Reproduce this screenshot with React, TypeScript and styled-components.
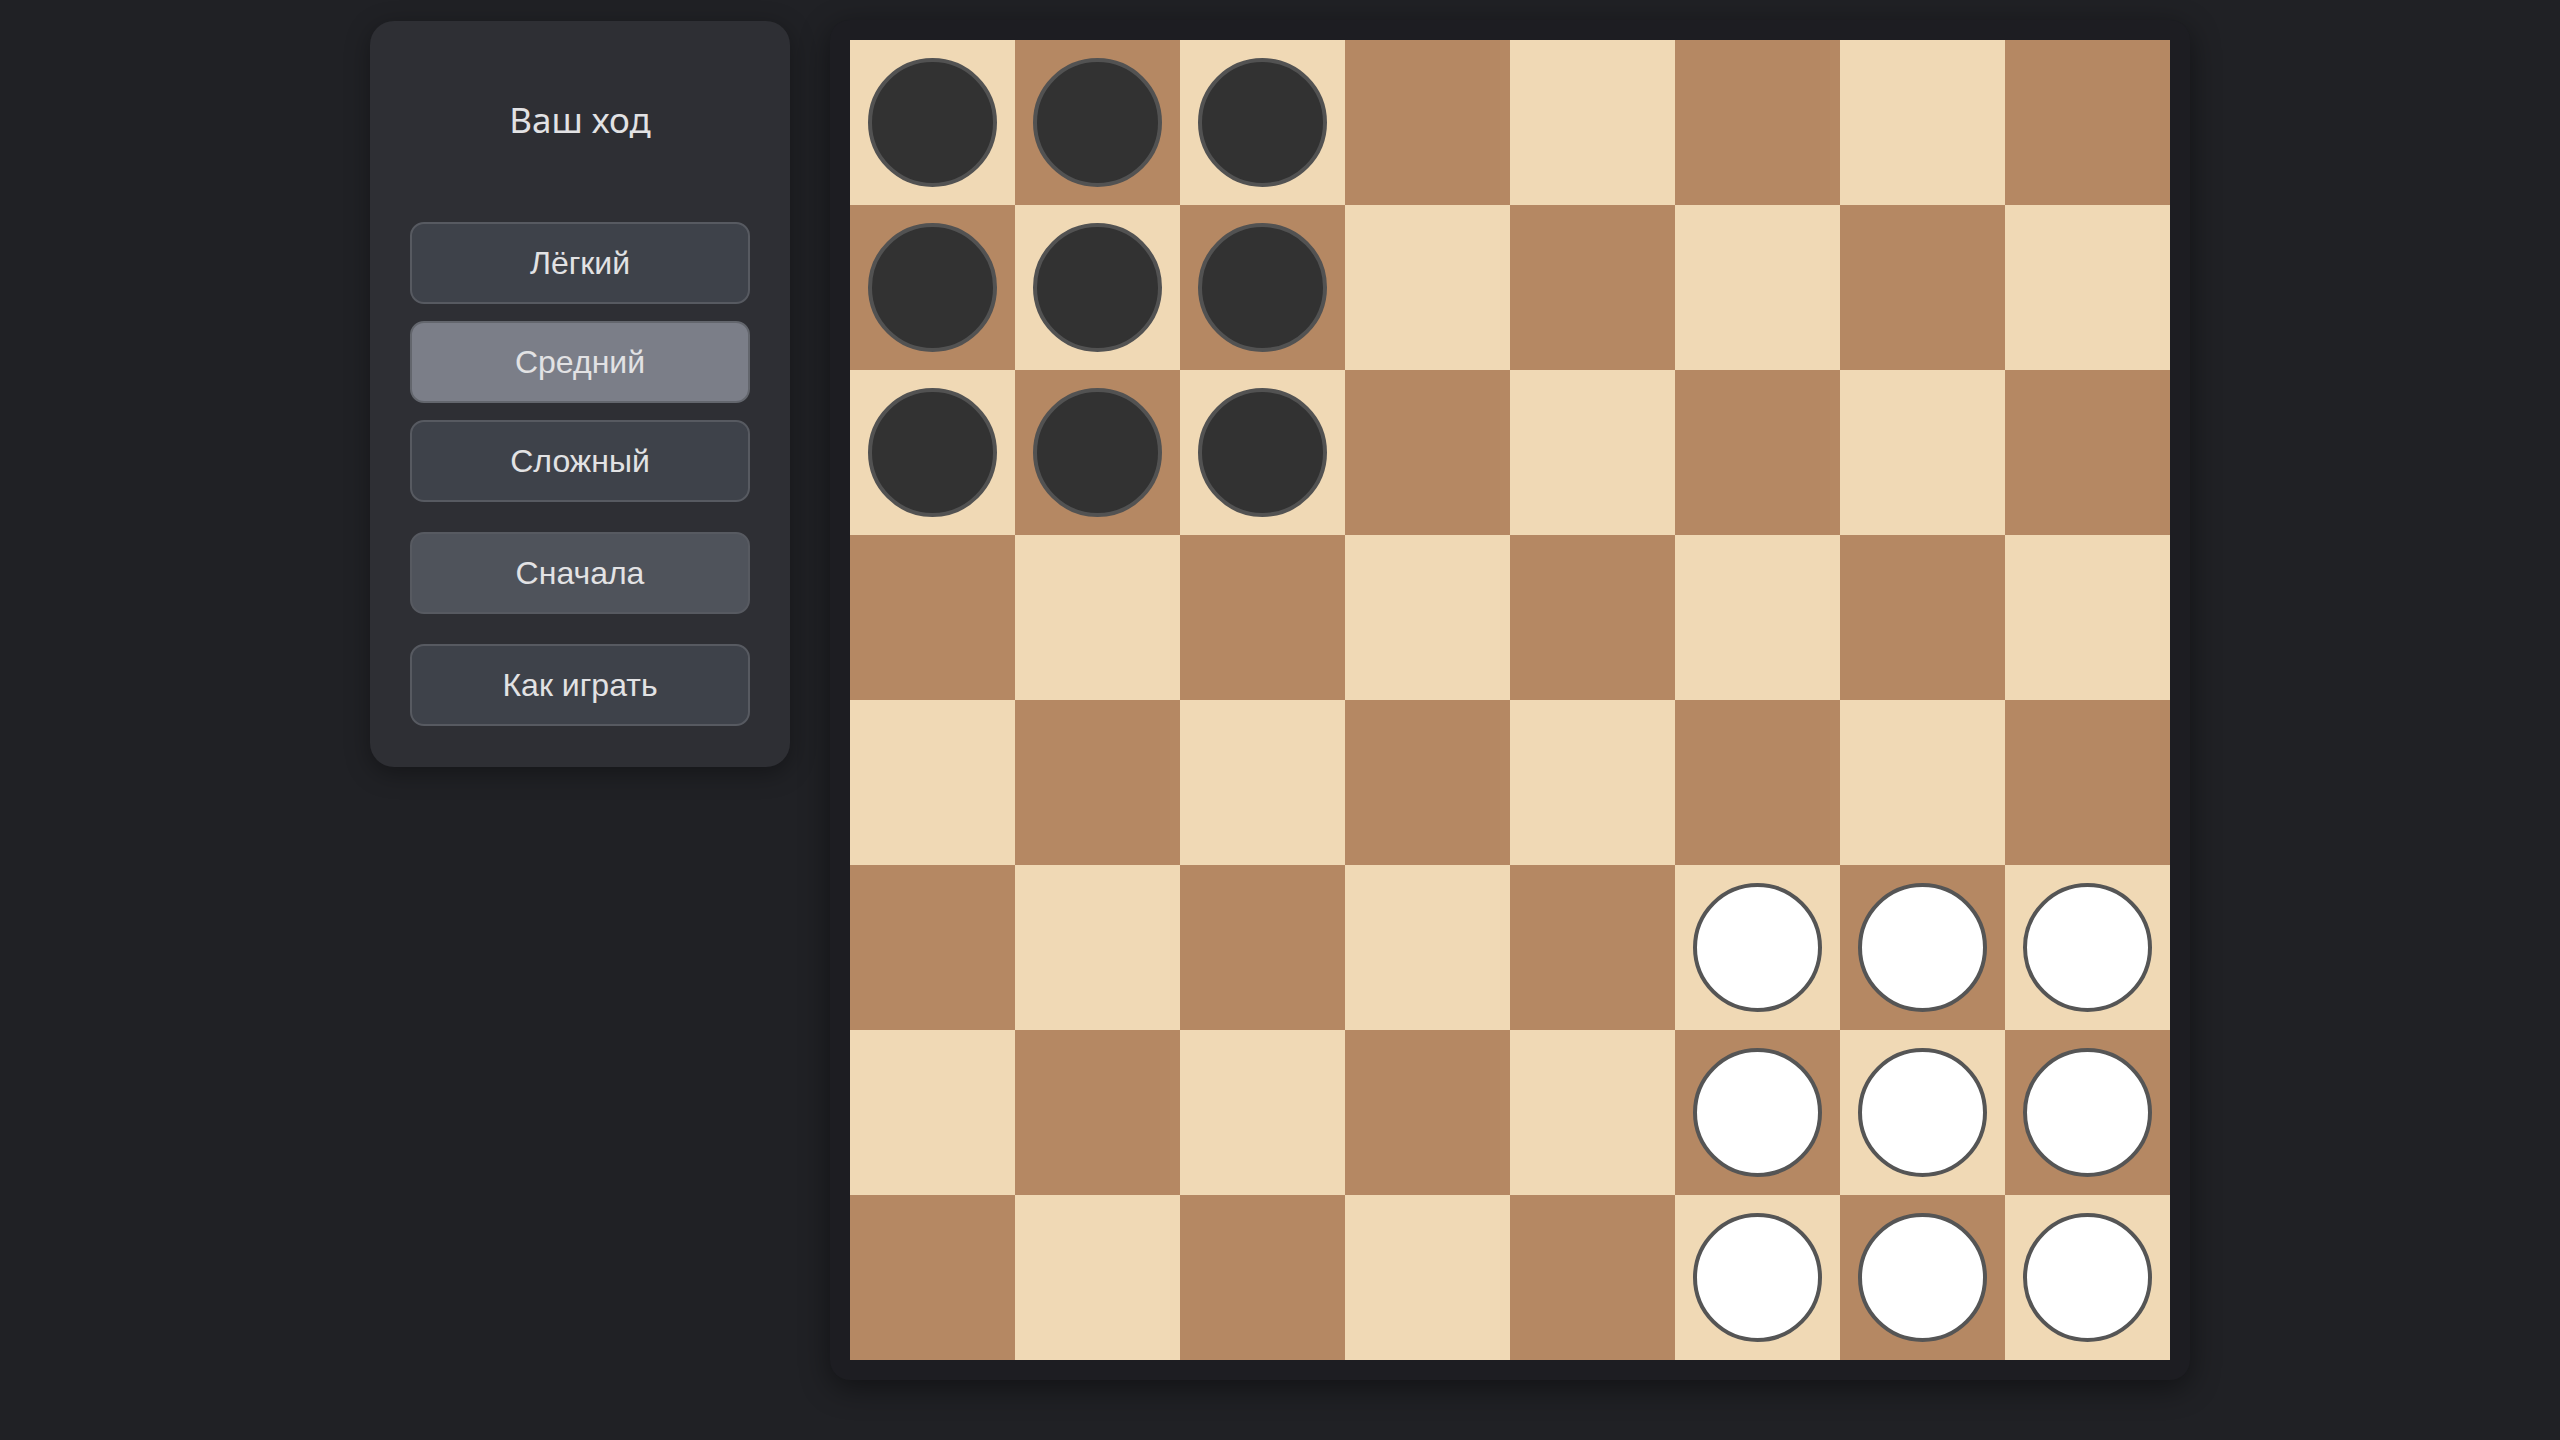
import React from "react";
import styled, { createGlobalStyle } from "styled-components";

const Global = createGlobalStyle`
  html, body {
    margin: 0;
    padding: 0;
    background: #202125;
    min-height: 100%;
  }
  body {
    font-family: "Noto Sans", "Open Sans", sans-serif;
    color: #e4e4e6;
  }
`;

const Page = styled.div`
  display: flex;
  justify-content: center;
  align-items: flex-start;
  gap: 40px;
  padding: 20px 0;
  min-height: 1440px;
  box-sizing: border-box;
  background: #202125;
`;

const Sidebar = styled.aside`
  width: 420px;
  box-sizing: border-box;
  margin-top: 1px;
  padding: 40px 40px 41px;
  background: #2e2f34;
  border-radius: 24px;
  box-shadow: 0 6px 24px rgba(0, 0, 0, 0.35);
  display: flex;
  flex-direction: column;
`;

const Title = styled.div`
  margin: 37px 0 80px;
  text-align: center;
  font-family: "Noto Sans", sans-serif;
  font-size: 35px;
  line-height: 44px;
  color: #e2e2e4;
`;

const Group = styled.div<{ $mt?: number }>`
  display: flex;
  flex-direction: column;
  gap: 17px;
  margin-top: ${(p) => p.$mt ?? 0}px;
`;

const Btn = styled.button<{ $variant?: "normal" | "active" | "reset" }>`
  height: 82px;
  width: 100%;
  box-sizing: border-box;
  border-radius: 14px;
  border: 2px solid
    ${(p) => (p.$variant === "active" ? "#63666d" : "#575a61")};
  background: ${(p) =>
    p.$variant === "active"
      ? "#7b7e88"
      : p.$variant === "reset"
      ? "#4f535b"
      : "#3e424a"};
  color: #e2e2e4;
  font-family: "Liberation Sans", Arial, sans-serif;
  font-size: 32px;
  cursor: pointer;
  padding: 0;
`;

const Frame = styled.div`
  padding: 20px;
  background: #1d1d22;
  border-radius: 20px;
  box-shadow: 0 8px 30px rgba(0, 0, 0, 0.45);
`;

const Board = styled.div`
  display: grid;
  grid-template-columns: repeat(8, 165px);
  grid-template-rows: repeat(8, 165px);
`;

const Cell = styled.div<{ $dark: boolean }>`
  background: ${(p) => (p.$dark ? "#b58863" : "#f0d9b5")};
  display: flex;
  align-items: center;
  justify-content: center;
`;

const Piece = styled.div<{ $color: "b" | "w" }>`
  width: 129px;
  height: 129px;
  box-sizing: border-box;
  border-radius: 50%;
  border: ${(p) => (p.$color === "b" ? "4px solid #525252" : "4px solid #555555")};
  background: ${(p) => (p.$color === "b" ? "#323232" : "#ffffff")};
`;

function pieceAt(r: number, c: number): "b" | "w" | null {
  if (r < 3 && c < 3) return "b";
  if (r >= 5 && c >= 5) return "w";
  return null;
}

export default function App() {
  const cells = [];
  for (let r = 0; r < 8; r++) {
    for (let c = 0; c < 8; c++) {
      const p = pieceAt(r, c);
      cells.push(
        <Cell key={`${r}-${c}`} $dark={(r + c) % 2 === 1}>
          {p && <Piece $color={p} />}
        </Cell>
      );
    }
  }
  return (
    <>
      <Global />
      <Page>
        <Sidebar>
          <Title>Ваш ход</Title>
          <Group>
            <Btn>Лёгкий</Btn>
            <Btn $variant="active">Средний</Btn>
            <Btn>Сложный</Btn>
          </Group>
          <Group $mt={30}>
            <Btn $variant="reset">Сначала</Btn>
          </Group>
          <Group $mt={30}>
            <Btn>Как играть</Btn>
          </Group>
        </Sidebar>
        <Frame>
          <Board>{cells}</Board>
        </Frame>
      </Page>
    </>
  );
}
